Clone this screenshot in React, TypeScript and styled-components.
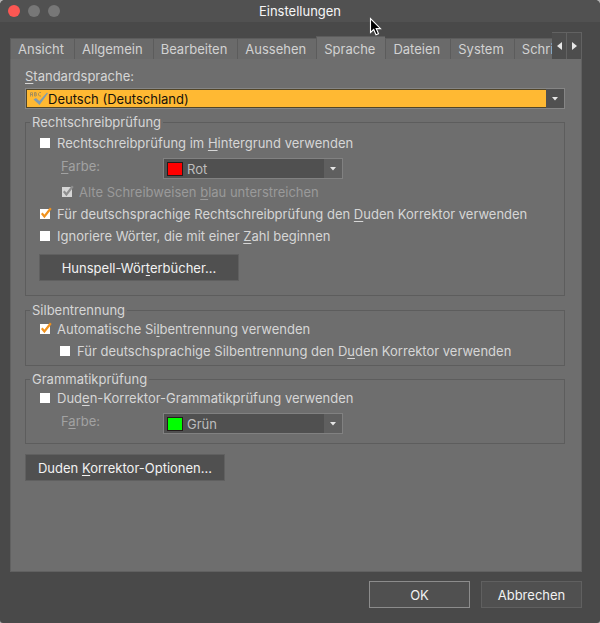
import React, { useState, type ReactNode } from 'react';
import styled, { createGlobalStyle } from 'styled-components';

const GlobalStyle = createGlobalStyle`
  *, *::before, *::after { box-sizing: border-box; }
  body {
    margin: 0;
    background: #b4b4b4;
    color: #d6d6d6;
    font: 13px/16px Inter, "Liberation Sans", sans-serif;
  }
  button, select, input { font: inherit; margin: 0; }
  u { text-underline-offset: 2px; text-decoration-thickness: 1px; text-decoration-skip-ink: none; }
`;

const Window = styled.div`
  position: relative;
  display: flex;
  flex-direction: column;
  min-height: 100vh;
  border-radius: 5px 5px 3px 3px;
  background: #494949;
  overflow: hidden;
`;

const TitleBar = styled.header`
  display: grid;
  grid-template-columns: 1fr auto 1fr;
  align-items: center;
  height: 22px;
  padding: 0 8px;
  background: #515151;
`;

const Title = styled.h1`
  margin: 0;
  font-size: 13px;
  font-weight: 400;
  color: #f6f6f6;
`;

const Lights = styled.div`
  display: flex;
  gap: 8px;
`;

const Light = styled.button<{ $color: string }>`
  width: 12px;
  height: 12px;
  padding: 0;
  border: 0;
  border-radius: 50%;
  background: ${(p) => p.$color};
`;

const Body = styled.main`
  flex: 1;
  display: flex;
  flex-direction: column;
  padding: 10px 18px 15px 10px;
`;

const TabStrip = styled.div`
  display: flex;
  align-items: flex-end;
  height: 28px;
  margin-bottom: -1px;
`;

const TabList = styled.div`
  flex: 1;
  min-width: 0;
  display: flex;
  align-items: flex-end;
  overflow: hidden;
`;

const Tab = styled.button<{ $active: boolean }>`
  flex: none;
  height: ${(p) => (p.$active ? 24 : 22)}px;
  padding: 0 10px 0 7px;
  border: solid #5c5c5c;
  border-width: 1px 0 ${(p) => (p.$active ? 0 : 1)}px 1px;
  background: ${(p) => (p.$active ? '#6e6e6e' : '#6a6a6a')};
  color: #d2d2d2;
  white-space: nowrap;
`;

const ScrollButton = styled.button`
  flex: none;
  display: grid;
  place-items: center;
  width: 15px;
  height: 28px;
  padding: 0;
  border: 1px solid #626262;
  border-left-width: 0;
  background: #4d4d4d;
`;

const Panel = styled.section`
  flex: 1;
  display: flex;
  flex-direction: column;
  align-items: stretch;
  padding: 9px 16px 10px 14px;
  border: solid #616161;
  border-width: 0 1px 1px;
  background: #6e6e6e;
`;

const LanguageLabel = styled.label`
  align-self: flex-start;
  margin-bottom: 4px;
`;

const Group = styled.fieldset<{ $gap?: number; $top?: number; $bottom?: number }>`
  min-width: 0;
  margin: ${(p) => p.$gap ?? 5}px 0 0;
  padding: ${(p) => p.$top ?? 0}px 13px ${(p) => p.$bottom ?? 3}px;
  border: 1px solid #5d5d5d;
`;

const Legend = styled.legend`
  margin-left: -9px;
  padding: 0 2px;
`;

const Row = styled.div<{ $indent?: number }>`
  display: flex;
  align-items: center;
  height: 22px;
  padding-left: ${(p) => p.$indent ?? 1}px;
`;

const CheckLabel = styled.label<{ $disabled?: boolean }>`
  display: flex;
  align-items: center;
  gap: 7px;
  white-space: nowrap;
  color: ${(p) => (p.$disabled ? '#9a9a9a' : '#d6d6d6')};
`;

const Box = styled.span`
  position: relative;
  display: block;
  width: 10px;
  height: 10px;
  svg { position: absolute; left: 0; bottom: 0; pointer-events: none; }
`;

const BoxInput = styled.input`
  appearance: none;
  display: block;
  width: 10px;
  height: 10px;
  background: #fff;
  &:disabled { background: #d6d6d6; }
`;

const ColorRow = styled.div`
  display: grid;
  grid-template-columns: 102px 180px;
  align-items: start;
  padding: 4px 0 2px 22px;
  color: #a2a2a2;
`;

const SelectFrame = styled.div<{ $large?: boolean }>`
  display: grid;
  grid-template-columns: auto 1fr 18px;
  align-items: center;
  height: 21px;
  border: 1px solid ${(p) => (p.$large ? '#858585' : '#818181')};
  background: ${(p) => (p.$large ? '#505050' : '#5f5f5f')};
  & > * { grid-row: 1; }
`;

const SelectBox = styled.select<{ $large?: boolean }>`
  appearance: none;
  grid-column: 1 / 3;
  width: 100%;
  height: 19px;
  padding: 0 0 0 ${(p) => (p.$large ? 21 : 23)}px;
  border: ${(p) => (p.$large ? '1px solid #514528' : '0')};
  border-right: 0;
  border-radius: 0;
  background: ${(p) => (p.$large ? '#ffb933' : '#505050')};
  color: ${(p) => (p.$large ? '#17120a' : '#bdbdbd')};
  opacity: 1;
`;

const Swatch = styled.span<{ $color: string }>`
  grid-column: 1;
  width: 16px;
  height: 14px;
  margin-left: 3px;
  border: 1px solid #241c1c;
  background: ${(p) => p.$color};
  z-index: 1;
  pointer-events: none;
`;

const SpellSvg = styled.svg`
  grid-column: 1;
  margin-left: 3px;
  z-index: 1;
  pointer-events: none;
`;

const ArrowSvg = styled.svg`
  grid-column: 3;
  justify-self: center;
  pointer-events: none;
`;

const PushButton = styled.button<{ $width: number; $default?: boolean }>`
  display: block;
  width: ${(p) => p.$width}px;
  height: 27px;
  padding: 0;
  border: 1px solid ${(p) => (p.$default ? '#8c8c8c' : '#606060')};
  background: #505050;
  color: #f2f2f2;
`;

const Dictionaries = styled.div`
  padding: 7px 0 11px;
`;

const Options = styled.div`
  padding-top: 10px;
`;

const Footer = styled.footer`
  display: flex;
  justify-content: flex-end;
  gap: 11px;
  padding-top: 9px;
`;

const Pointer = styled.svg`
  position: absolute;
  left: 369px;
  top: 17px;
  pointer-events: none;
`;

function Check({ children, on = false, disabled = false }: { children: ReactNode; on?: boolean; disabled?: boolean }) {
  const [checked, setChecked] = useState(on);
  return (
    <CheckLabel $disabled={disabled}>
      <Box>
        <BoxInput type="checkbox" checked={checked} disabled={disabled} onChange={(e) => setChecked(e.target.checked)} />
        {checked && (
          <svg width="12" height="12" viewBox="0 0 12 12" aria-hidden="true">
            <path d="M1.8 6.2 4.4 9.4 10.8 1.2" fill="none" stroke={disabled ? '#8f8f8f' : '#f0921e'} strokeWidth="2.2" />
          </svg>
        )}
      </Box>
      <span>{children}</span>
    </CheckLabel>
  );
}

function DownArrow() {
  return (
    <ArrowSvg width="6" height="4" viewBox="0 0 6 4" aria-hidden="true">
      <path d="M0 0h6L3 3.6z" fill="#e6e6e6" />
    </ArrowSvg>
  );
}

function ColorField({ id, label, name, color }: { id: string; label: ReactNode; name: string; color: string }) {
  return (
    <ColorRow>
      <label htmlFor={id}>{label}</label>
      <SelectFrame>
        <SelectBox id={id} disabled defaultValue={name}>
          <option>{name}</option>
        </SelectBox>
        <Swatch $color={color} />
        <DownArrow />
      </SelectFrame>
    </ColorRow>
  );
}

const tabs = ['Ansicht', 'Allgemein', 'Bearbeiten', 'Aussehen', 'Sprache', 'Dateien', 'System', 'Schriften'];

export default function App() {
  const [active, setActive] = useState('Sprache');
  return (
    <>
      <GlobalStyle />
      <Window>
        <TitleBar>
          <Lights>
            <Light $color="#fc5753" aria-label="Schließen" />
            <Light $color="#777777" aria-label="Minimieren" />
            <Light $color="#777777" aria-label="Zoomen" />
          </Lights>
          <Title>Einstellungen</Title>
        </TitleBar>
        <Body>
          <TabStrip>
            <TabList role="tablist">
              {tabs.map((t) => (
                <Tab key={t} role="tab" aria-selected={t === active} $active={t === active} onClick={() => setActive(t)}>
                  {t}
                </Tab>
              ))}
            </TabList>
            <ScrollButton aria-label="Zurück">
              <svg width="5" height="8" viewBox="0 0 5 8"><path d="M5 0v8L0 4z" fill="#e6e6e6" /></svg>
            </ScrollButton>
            <ScrollButton aria-label="Weiter">
              <svg width="5" height="8" viewBox="0 0 5 8"><path d="M0 0v8l5-4z" fill="#e6e6e6" /></svg>
            </ScrollButton>
          </TabStrip>
          <Panel role="tabpanel">
            <LanguageLabel htmlFor="language"><u>S</u>tandardsprache:</LanguageLabel>
            <SelectFrame $large>
              <SelectBox id="language" $large defaultValue="de">
                <option value="de">Deutsch (Deutschland)</option>
              </SelectBox>
              <SpellSvg width="20" height="15" viewBox="0 0 20 15" aria-hidden="true">
                <path
                  d="M1.5 5.500V2l1-1 1 1v3.500M1.500 3.500h2M5.500 5V1.500H7L7.500 2 7 3l.5 1L7 5H5.500M5.500 3H7M12 1.500h-1.500l-1 1V4l1 1H12"
                  fill="none"
                  stroke="#a98f58"
                  strokeWidth="1"
                />
                <path d="M4.500 8.500 7 7l3.300 3L18 1.500l1 .8L10.500 14z" fill="#7f9bb0" />
              </SpellSvg>
              <DownArrow />
            </SelectFrame>

            <Group $top={2}>
              <Legend>Rechtschreibprüfung</Legend>
              <Row><Check>Rechtschreibprüfung im <u>H</u>intergrund verwenden</Check></Row>
              <ColorField id="spell-color" label={<><u>F</u>arbe:</>} name="Rot" color="#ff0000" />
              <Row $indent={23}><Check on disabled>Alte Schreibweisen <u>b</u>lau unterstreichen</Check></Row>
              <Row><Check on>Für deutschsprachige Rechtschreibprüfung den <u>D</u>uden Korrektor verwenden</Check></Row>
              <Row><Check>Ignoriere Wörter, die mit einer <u>Z</u>ahl beginnen</Check></Row>
              <Dictionaries>
                <PushButton $width={200}>Hunspell-Wör<u>t</u>erbücher...</PushButton>
              </Dictionaries>
            </Group>

            <Group $gap={6}>
              <Legend>Silbentrennung</Legend>
              <Row><Check on>Automatische Si<u>l</u>bentrennung verwenden</Check></Row>
              <Row $indent={21}><Check>Für deutschsprachige Silbentrennung den D<u>u</u>den Korrektor verwenden</Check></Row>
            </Group>

            <Group $bottom={7}>
              <Legend>Grammatikprüfung</Legend>
              <Row><Check>Dud<u>e</u>n-Korrektor-Grammatikprüfung verwenden</Check></Row>
              <ColorField id="grammar-color" label={<>F<u>a</u>rbe:</>} name="Grün" color="#00ff00" />
            </Group>

            <Options>
              <PushButton $width={200}>Duden <u>K</u>orrektor-Optionen...</PushButton>
            </Options>
          </Panel>
          <Footer>
            <PushButton $width={101} $default>OK</PushButton>
            <PushButton $width={101}>Abbrechen</PushButton>
          </Footer>
        </Body>
        <Pointer width="13" height="20" viewBox="0 0 13 20" aria-hidden="true">
          <path d="M1.500 1.500v14l3.200-3 2.300 5.300 2.500-1.100-2.300-5.100h4.300z" fill="#000" stroke="#fff" strokeWidth="1.100" />
        </Pointer>
      </Window>
    </>
  );
}
